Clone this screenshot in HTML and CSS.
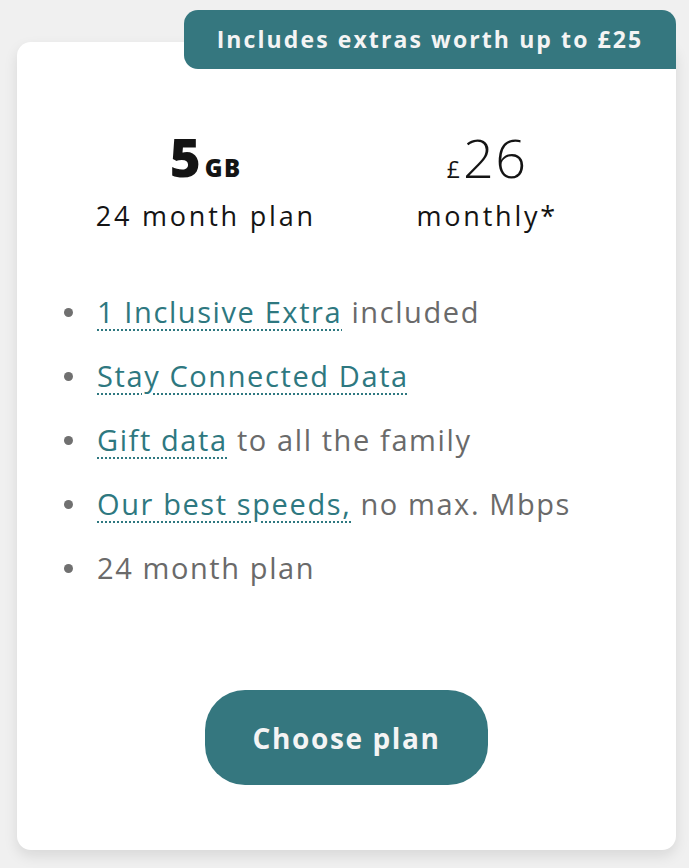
FILE: index.html
```html
<!DOCTYPE html>
<html lang="en">
<head>
<meta charset="utf-8">
<title>Plan card</title>
<link rel="stylesheet" href="styles.css">
</head>
<body>
<div class="page">
  <div class="card">
    <div class="badge">Includes extras worth up to £25</div>
    <div class="summary">
      <div class="col">
        <div class="big"><span class="num">5</span><span class="unit">GB</span></div>
        <div class="sub">24 month plan</div>
      </div>
      <div class="col">
        <div class="big price"><span class="cur">£</span><span class="amt">26</span></div>
        <div class="sub">monthly*</div>
      </div>
    </div>
    <ul class="features">
      <li><a class="link" href="#">1 Inclusive Extra</a> included</li>
      <li><a class="link" href="#">Stay Connected Data</a></li>
      <li><a class="link" href="#">Gift data</a> to all the family</li>
      <li><a class="link" href="#">Our best speeds,</a> no max. Mbps</li>
      <li>24 month plan</li>
    </ul>
    <div class="actions">
      <button class="cta" type="button">Choose plan</button>
    </div>
  </div>
</div>
</body>
</html>
```

FILE: styles.css
```css
* { box-sizing: border-box; }
html, body { margin: 0; padding: 0; }
body {
  background: #f0f0f0;
  font-family: "Open Sans", "DejaVu Sans", sans-serif;
  width: 689px;
  height: 868px;
  overflow: hidden;
}
.page {
  padding: 42px 13px 0 17px;
}
.card {
  position: relative;
  background: #ffffff;
  border-radius: 14px;
  height: 808px;
  box-shadow: 0 6px 14px rgba(0, 0, 0, 0.10);
  display: flex;
  flex-direction: column;
}
.badge {
  position: absolute;
  top: -32px;
  right: 0;
  width: 492px;
  height: 59px;
  background: #35777f;
  color: #f4f4f4;
  border-radius: 14px 14px 0 14px;
  font-weight: 700;
  font-size: 23px;
  letter-spacing: 2.1px;
  display: flex;
  align-items: center;
  justify-content: center;
  padding-bottom: 2px;
}
.summary {
  display: grid;
  grid-template-columns: 1fr 1fr;
  padding: 88px 48px 0;
}
.col {
  display: flex;
  flex-direction: column;
  align-items: center;
}
.big {
  height: 58px;
  display: flex;
  align-items: baseline;
  color: #141414;
  line-height: 1;
}
.num {
  font-weight: 800;
  font-size: 53px;
  letter-spacing: 1px;
}
.unit {
  font-weight: 800;
  font-size: 24px;
  letter-spacing: 1.5px;
  margin-left: 3px;
}
.cur {
  font-size: 23px;
  font-weight: 400;
  margin-right: 3px;
}
.amt {
  font-size: 54px;
  font-weight: 300;
  letter-spacing: 1.5px;
}
.sub {
  font-size: 27px;
  color: #141414;
  margin-top: 9px;
  letter-spacing: 2.8px;
}
.features {
  list-style: none;
  margin: 56px 0 0;
  padding: 0 0 0 47px;
  display: flex;
  flex-direction: column;
  gap: 21px;
}
.features li {
  position: relative;
  padding-left: 33px;
  font-size: 29px;
  line-height: 43px;
  color: #6a6a6a;
  letter-spacing: 1.6px;
}
.features li::before {
  content: "";
  position: absolute;
  left: 0;
  top: 18px;
  width: 9px;
  height: 9px;
  border-radius: 50%;
  background: #707070;
}
.link {
  color: #2e7880;
  text-decoration: underline dotted #2e7880;
  text-decoration-thickness: 2px;
  text-underline-offset: 6px;
}
.actions {
  display: flex;
  justify-content: center;
  margin-top: 101px;
}
.cta {
  width: 283px;
  height: 95px;
  border: none;
  border-radius: 40px;
  background: #35777f;
  color: #f4f4f4;
  font-family: inherit;
  font-weight: 700;
  font-size: 28px;
  letter-spacing: 1.6px;
  cursor: pointer;
}
```
